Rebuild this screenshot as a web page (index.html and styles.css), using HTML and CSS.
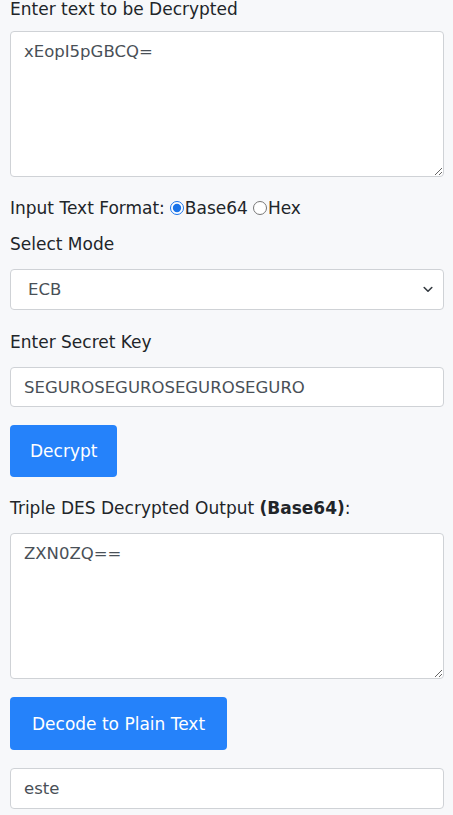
FILE: index.html
```html
<!DOCTYPE html>
<html>
<head>
<meta charset="utf-8">
<link rel="stylesheet" href="styles.css">
</head>
<body>
<div class="page">
  <label class="lbl first">Enter text to be Decrypted</label>
  <textarea class="area">xEopI5pGBCQ=</textarea>
  <div class="radios"><span>Input Text Format:</span><input type="radio" name="f" checked class="rd"><span>Base64</span><input type="radio" name="f" class="rd rd2"><span>Hex</span></div>
  <label class="lbl">Select Mode</label>
  <div class="selwrap">
    <div class="sel">ECB</div>
    <svg class="chev" width="10" height="7" viewBox="0 0 10 7"><path d="M1.2 1.5 L5 5.2 L8.8 1.5" fill="none" stroke="#343a40" stroke-width="1.6" stroke-linecap="round" stroke-linejoin="round"/></svg>
  </div>
  <label class="lbl gap20">Enter Secret Key</label>
  <input class="inp" type="text" value="SEGUROSEGUROSEGUROSEGURO">
  <button class="btn">Decrypt</button>
  <label class="lbl out">Triple DES Decrypted Output <b>(Base64)</b>:</label>
  <textarea class="area">ZXN0ZQ==</textarea>
  <button class="btn btn2">Decode to Plain Text</button>
  <input class="inp last" type="text" value="este">
</div>
</body>
</html>
```
FILE: styles.css
```css
html, body {
  margin: 0;
  padding: 0;
  background: #f7f8fa;
}
body {
  font-family: "DejaVu Sans", sans-serif;
  color: #212529;
  overflow: hidden;
}
.page {
  display: flex;
  flex-direction: column;
  align-items: flex-start;
  padding: 0 9px 0 10px;
  margin-top: -3px;
}
.lbl {
  display: block;
  font-size: 17px;
  line-height: 24px;
  margin-top: 12px;
}
.lbl.first { margin-top: 0; }
.lbl.gap20 { margin-top: 20px; }
.lbl.out { margin-top: 19px; }
.lbl b { font-weight: 700; }
.area {
  box-sizing: border-box;
  width: 100%;
  height: 146px;
  margin: 10px 0 0 0;
  padding: 8px 13px;
  border: 1px solid #cfd2d6;
  border-radius: 4px;
  background: #fff;
  font-family: "DejaVu Sans", sans-serif;
  font-size: 16.5px;
  line-height: 24px;
  color: #495057;
  resize: vertical;
}
.lbl.out + .area { margin-top: 13px; }
.radios {
  margin-top: 19px;
  font-size: 17px;
  line-height: 24px;
  display: flex;
  align-items: center;
}
.rd {
  width: 14px;
  height: 14px;
  margin: 0 1px 0 5px;
  accent-color: #1a73e8;
}
.rd2 { margin-left: 5px; }
.selwrap {
  position: relative;
  width: 100%;
  margin-top: 13px;
}
.sel {
  box-sizing: border-box;
  width: 100%;
  height: 41px;
  padding: 0 17px;
  border: 1px solid #cfd2d6;
  border-radius: 4px;
  background: #fff;
  font-size: 16.5px;
  line-height: 39px;
  color: #495057;
}
.chev {
  position: absolute;
  right: 11px;
  top: 17px;
}
.inp {
  box-sizing: border-box;
  width: 100%;
  height: 40px;
  margin-top: 13px;
  padding: 0 13px;
  border: 1px solid #cfd2d6;
  border-radius: 4px;
  background: #fff;
  font-family: "DejaVu Sans", sans-serif;
  font-size: 16.5px;
  color: #495057;
}
.inp.last {
  margin-top: 18px;
  height: 41px;
}
.btn {
  margin-top: 18px;
  height: 52px;
  padding: 0 20px;
  border: none;
  border-radius: 4px;
  background: #2582fa;
  color: #fff;
  font-family: "DejaVu Sans", sans-serif;
  font-size: 17px;
}
.btn2 {
  height: 53px;
  padding: 0 22px;
}
```
